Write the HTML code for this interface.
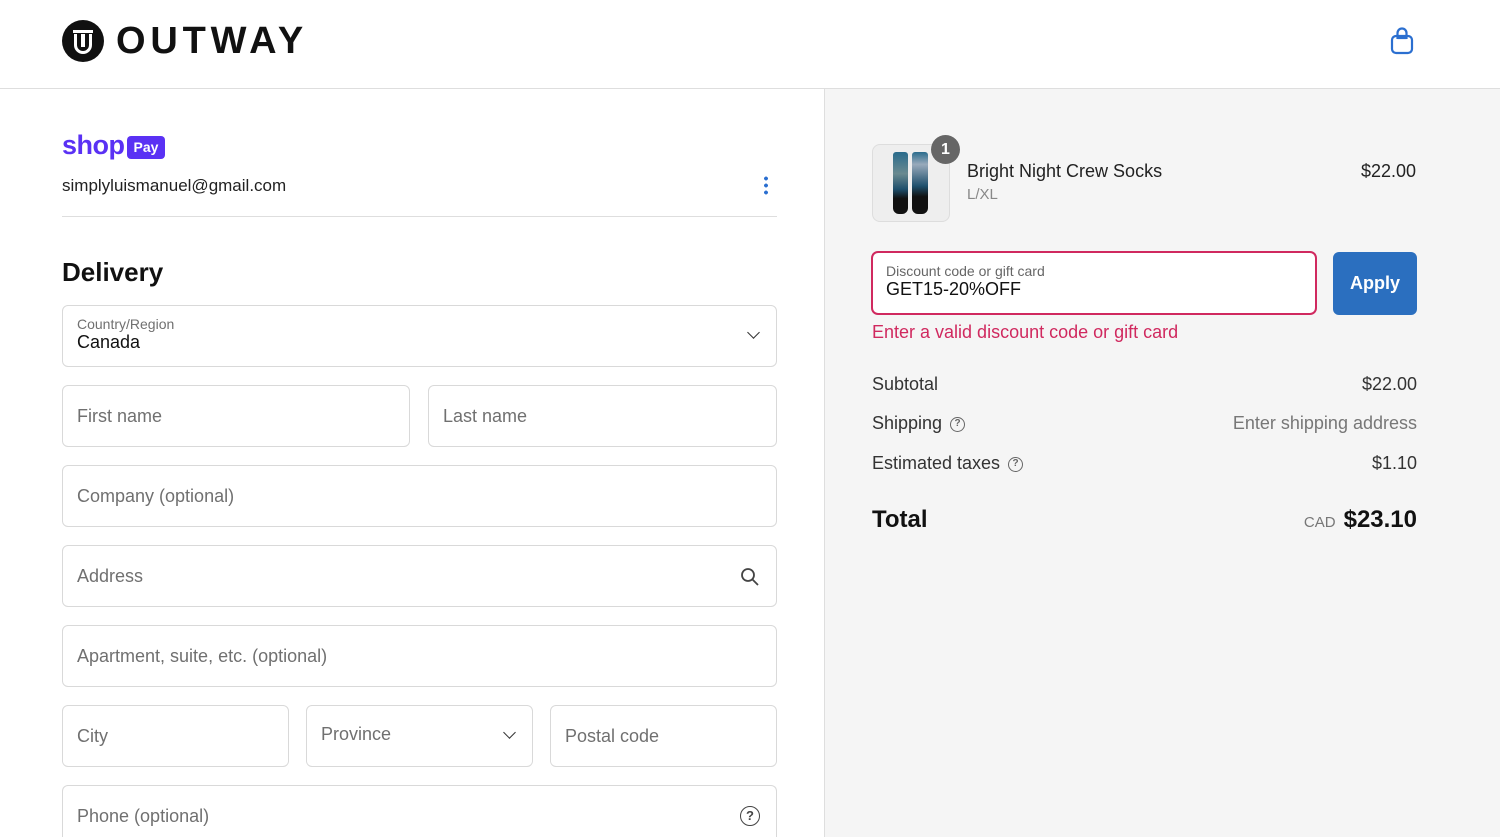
<!DOCTYPE html>
<html><head><meta charset="utf-8"><style>
*{box-sizing:border-box;margin:0;padding:0}
html{width:1500px;height:837px;overflow:hidden}
body{width:1500px;height:837px;overflow:hidden;font-family:"Liberation Sans",sans-serif;color:#1a1a1a;background:#fff;position:relative}
.hdr{position:absolute;left:0;top:0;width:1500px;height:89px;border-bottom:1px solid #dedede;background:#fff}
.right{position:absolute;left:824px;top:89px;width:676px;height:748px;background:#f5f5f5;border-left:1px solid #dedede}
.a{position:absolute}
.in{position:absolute;border:1px solid #d9d9d9;border-radius:6px;background:#fff;height:62px;font-size:18px;color:#707070;padding-left:14px;line-height:60px}
.chev{position:absolute;right:18px;top:24px;width:9px;height:9px;border-right:1.8px solid #333;border-bottom:1.8px solid #333;transform:rotate(45deg)}
.row{position:absolute;left:872px;width:545px;font-size:18px;color:#333}
.row span.r{position:absolute;right:0}
.q{display:inline-block;width:15px;height:15px;border:1.5px solid #666;border-radius:50%;font-size:10px;text-align:center;line-height:12px;vertical-align:middle;margin-left:8px;color:#666;font-weight:bold}
</style></head><body>
<div class="hdr">
 <div class="a" style="left:62px;top:20px;width:42px;height:42px;border-radius:50%;background:#111"></div>
 <div class="a" style="left:73px;top:30px;width:20px;height:2.5px;background:#fff"></div>
 <div class="a" style="left:74px;top:34px;width:18px;height:20px;border:3px solid #fff;border-top:none;border-radius:0 0 9px 9px"></div>
 <div class="a" style="left:81px;top:34px;width:4px;height:13px;background:#fff"></div>
 <div class="a" style="left:116px;top:20px;font-size:38px;font-weight:bold;letter-spacing:4.8px;color:#111">OUTWAY</div>
 <svg class="a" style="left:1389px;top:26px" width="26" height="30" viewBox="0 0 26 30"><rect x="3" y="10" width="20" height="17" rx="4" fill="none" stroke="#2b6fd0" stroke-width="2.2"/><path d="M8.5 13V7a4.5 4.5 0 0 1 9 0v6" fill="none" stroke="#2b6fd0" stroke-width="2.2"/><path d="M8.5 12h9" stroke="#2b6fd0" stroke-width="2.2"/></svg>
</div>
<div class="a" style="left:62px;top:130px;font-size:27px;font-weight:bold;color:#5a31f4;letter-spacing:-0.5px">shop</div>
<div class="a" style="left:127px;top:136px;width:38px;height:23px;background:#5a31f4;border-radius:4px;color:#fff;font-size:14px;font-weight:bold;text-align:center;line-height:23px">Pay</div>
<div class="a" style="left:62px;top:176px;font-size:17px;color:#222">simplyluismanuel@gmail.com</div>
<div class="a" style="left:764px;top:175px;width:4px;height:20px;background:radial-gradient(circle,#2b6fd0 1.8px,transparent 2px) 0 0/4px 7px repeat-y"></div>
<div class="a" style="left:62px;top:216px;width:715px;height:1px;background:#dedede"></div>
<div class="a" style="left:62px;top:257px;font-size:26px;font-weight:bold;color:#111">Delivery</div>
<div class="in" style="left:62px;top:305px;width:715px;line-height:normal"><div style="font-size:14px;margin-top:10px">Country/Region</div><div style="font-size:18px;color:#111">Canada</div><div class="chev" style="top:22px"></div></div>
<div class="in" style="left:62px;top:385px;width:348px">First name</div>
<div class="in" style="left:428px;top:385px;width:349px">Last name</div>
<div class="in" style="left:62px;top:465px;width:715px">Company (optional)</div>
<div class="in" style="left:62px;top:545px;width:715px">Address
 <svg class="a" style="right:16px;top:21px" width="20" height="20" viewBox="0 0 20 20"><circle cx="8" cy="8" r="6" fill="none" stroke="#444" stroke-width="1.8"/><path d="M12.5 12.5L18 18" stroke="#444" stroke-width="1.8"/></svg></div>
<div class="in" style="left:62px;top:625px;width:715px">Apartment, suite, etc. (optional)</div>
<div class="in" style="left:62px;top:705px;width:227px">City</div>
<div class="in" style="left:306px;top:705px;width:227px;line-height:56px">Province<div class="chev" style="top:22px"></div></div>
<div class="in" style="left:550px;top:705px;width:227px">Postal code</div>
<div class="in" style="left:62px;top:785px;width:715px;height:52px;border-bottom:none;border-radius:6px 6px 0 0">Phone (optional)<span class="q" style="position:absolute;right:16px;top:20px;width:20px;height:20px;line-height:17px;font-size:13px;border-color:#444;color:#444">?</span></div>
<div class="right"></div>
<div class="a" style="left:872px;top:144px;width:78px;height:78px;border:1px solid #ddd;border-radius:8px;background:#eee"></div>
<div class="a" style="left:893px;top:152px;width:15px;height:62px;border-radius:3px 3px 6px 6px;background:linear-gradient(#2a6b8c,#6a8a90 35%,#1e4f6c 60%,#111 75%)"></div>
<div class="a" style="left:912px;top:152px;width:16px;height:62px;border-radius:3px 3px 6px 6px;background:linear-gradient(#2a6b8c,#9ab 20%,#1e4f6c 55%,#111 72%)"></div>
<div class="a" style="left:931px;top:135px;width:29px;height:29px;border-radius:50%;background:#666;color:#fff;font-weight:bold;font-size:16px;text-align:center;line-height:29px">1</div>
<div class="a" style="left:967px;top:161px;font-size:18px;color:#222">Bright Night Crew Socks</div>
<div class="a" style="left:967px;top:186px;font-size:15px;color:#888">L/XL</div>
<div class="a" style="left:1361px;top:161px;font-size:18px;color:#222">$22.00</div>
<div class="a" style="left:871px;top:251px;width:446px;height:64px;border:2px solid #d0295f;border-radius:7px;background:#fff;padding:10px 0 0 13px"><div style="font-size:14px;color:#666">Discount code or gift card</div><div style="font-size:18px;color:#111">GET15-20%OFF</div></div>
<div class="a" style="left:1333px;top:252px;width:84px;height:63px;background:#2b6fbf;border-radius:6px;color:#fff;font-weight:bold;font-size:18px;text-align:center;line-height:63px">Apply</div>
<div class="a" style="left:872px;top:322px;font-size:18px;color:#d0295f">Enter a valid discount code or gift card</div>
<div class="row" style="top:374px">Subtotal<span class="r">$22.00</span></div>
<div class="row" style="top:413px">Shipping<span class="q">?</span><span class="r" style="color:#777">Enter shipping address</span></div>
<div class="row" style="top:453px">Estimated taxes<span class="q">?</span><span class="r">$1.10</span></div>
<div class="row" style="top:506px;font-size:24px;font-weight:bold;color:#111">Total<span class="r"><span style="font-size:15px;font-weight:normal;color:#777;margin-right:8px">CAD</span>$23.10</span></div>
</body></html>
